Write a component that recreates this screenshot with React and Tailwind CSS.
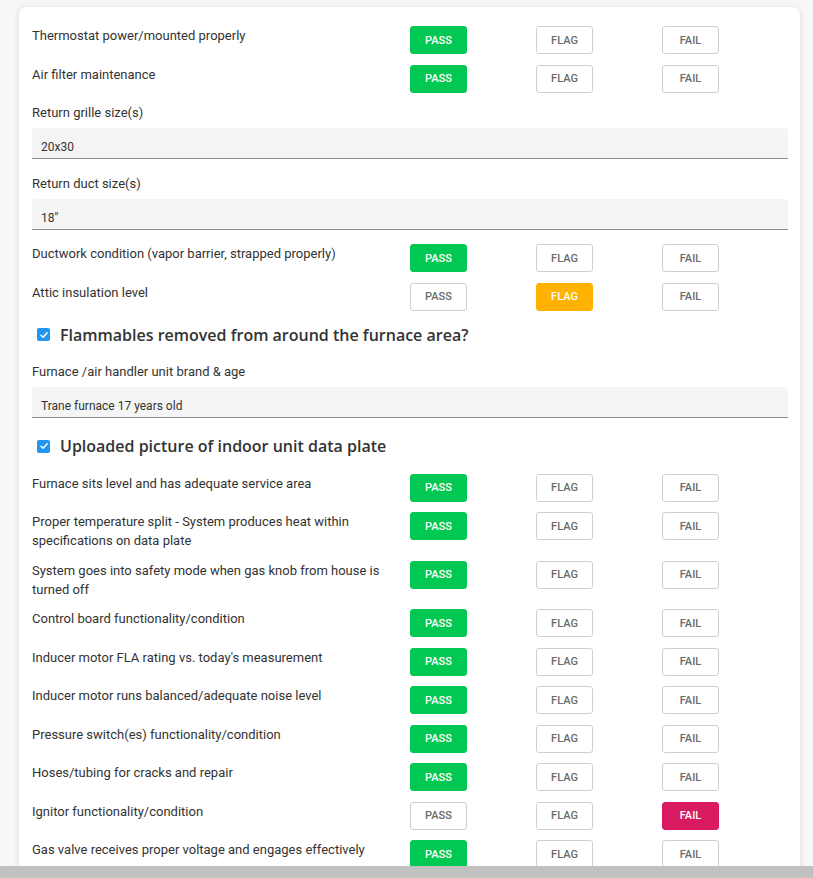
import React from 'react';

// ---------- Data ----------
const items = [
  { type: 'row', label: 'Thermostat power/mounted properly', value: 'pass' },
  { type: 'row', label: 'Air filter maintenance', value: 'pass' },
  { type: 'input', label: 'Return grille size(s)', value: '20x30' },
  { type: 'input', label: 'Return duct size(s)', value: '18"' },
  { type: 'row', label: 'Ductwork condition (vapor barrier, strapped properly)', value: 'pass' },
  { type: 'row', label: 'Attic insulation level', value: 'flag' },
  { type: 'check', label: 'Flammables removed from around the furnace area?' },
  { type: 'input', label: 'Furnace /air handler unit brand & age', value: 'Trane furnace 17 years old' },
  { type: 'check', label: 'Uploaded picture of indoor unit data plate' },
  { type: 'row', label: 'Furnace sits level and has adequate service area', value: 'pass' },
  { type: 'row', label: 'Proper temperature split - System produces heat within specifications on data plate', value: 'pass' },
  { type: 'row', label: 'System goes into safety mode when gas knob from house is turned off', value: 'pass' },
  { type: 'row', label: 'Control board functionality/condition', value: 'pass' },
  { type: 'row', label: "Inducer motor FLA rating vs. today's measurement", value: 'pass' },
  { type: 'row', label: 'Inducer motor runs balanced/adequate noise level', value: 'pass' },
  { type: 'row', label: 'Pressure switch(es) functionality/condition', value: 'pass' },
  { type: 'row', label: 'Hoses/tubing for cracks and repair', value: 'pass' },
  { type: 'row', label: 'Ignitor functionality/condition', value: 'fail' },
  { type: 'row', label: 'Gas valve receives proper voltage and engages effectively', value: 'pass' },
  { type: 'row', label: 'Flame sensor functionality/condition', value: 'pass' }
];

const activeStyles = {
  pass: 'bg-[#00c853] border-[#00c853] text-white',
  flag: 'bg-[#ffb300] border-[#ffb300] text-white',
  fail: 'bg-[#d81b60] border-[#d81b60] text-white'
};

// ---------- Pieces ----------
function StatusButton({ kind, active }) {
  return (
    <button
      className={`w-[57px] h-[28px] rounded-[3px] border text-[11px] font-medium uppercase leading-none ${active ? activeStyles[kind] : 'bg-white border-[#cfcfcf] text-[#6b6b6b]'}`}
    >
      {kind}
    </button>
  );
}

function CheckRow({ label, value }) {
  return (
    <div className="flex items-start mb-[10.5px]">
      <div className="w-[378px] pr-[15px] text-[13px] leading-[19px] text-[#333]">{label}</div>
      {['pass', 'flag', 'fail'].map((k) => (
        <div key={k} className="w-[126px]">
          <StatusButton kind={k} active={value === k} />
        </div>
      ))}
    </div>
  );
}

function TextField({ label, value }) {
  return (
    <div className="mb-[14.5px]">
      <div className="text-[13px] leading-[19px] text-[#333] mb-[6px]">{label}</div>
      <div className="h-[31px] bg-[#f5f5f5] border-b border-[#8c8c8c] rounded-t-[4px] px-[9px] pt-[11px] text-[12px] leading-[16px] text-[#333]">
        {value}
      </div>
    </div>
  );
}

function CheckHeading({ label }) {
  return (
    <div className="flex items-center h-[27px] mt-[1px] mb-[14px] pl-[5px]" style={{ fontFamily: '"Open Sans", sans-serif' }}>
      <span className="w-[13px] h-[13px] rounded-[2px] bg-[#2196f3] flex items-center justify-center mr-[10px]">
        <svg width="10" height="10" viewBox="0 0 10 10" fill="none">
          <path d="M2 5.2 L4.1 7.2 L8.2 2.8" stroke="white" strokeWidth="1.5" strokeLinecap="round" strokeLinejoin="round" />
        </svg>
      </span>
      <span className="text-[16px] font-semibold text-[#333]">{label}</span>
    </div>
  );
}

// ---------- App ----------
export default function App() {
  return (
    <div className="relative h-screen overflow-hidden bg-[#f7f7f7]" style={{ fontFamily: 'Roboto, "Liberation Sans", sans-serif' }}>
      <div className="ml-[19px] mt-[7px] w-[781px] bg-white rounded-[8px] shadow-[0_1px_6px_rgba(0,0,0,0.12)] pl-[13px] pr-[12px] pt-[19px] pb-[40px]">
        {items.map((it, i) => {
          if (it.type === 'row') return <CheckRow key={i} label={it.label} value={it.value} />;
          if (it.type === 'input') return <TextField key={i} label={it.label} value={it.value} />;
          return <CheckHeading key={i} label={it.label} />;
        })}
      </div>
      <div className="absolute left-0 right-0 bottom-0 h-[12px] bg-[#c1c1c1]" />
    </div>
  );
}
